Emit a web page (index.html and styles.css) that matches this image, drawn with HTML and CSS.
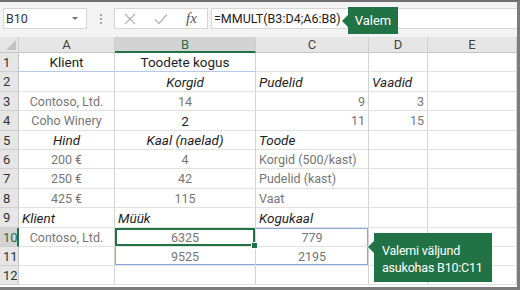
FILE: index.html
```html
<!DOCTYPE html>
<html lang="et">
<head>
    <meta charset="UTF-8">
    <title>MMULT</title>
    <link rel="stylesheet" href="styles.css">
</head>
<body>
    <div class="frame">
        <div class="toolbar">
            <div class="namebox"><span>B10</span><span class="caret"></span></div>
            <div class="grip"><span></span><span></span><span></span></div>
            <div class="fxbox">
                <svg class="ico-x" width="12" height="12" viewBox="0 0 12 12"><path d="M1 1L11 11M11 1L1 11" stroke="#b4b4b4" stroke-width="1.2" fill="none"/></svg>
                <svg class="ico-ok" width="14" height="12" viewBox="0 0 14 12"><path d="M1 6.5L5 10.5L13 1.5" stroke="#b4b4b4" stroke-width="1.3" fill="none"/></svg>
                <span class="fx">fx</span>
            </div>
            <div class="formula">=MMULT(B3:D4;A6:B8)</div>
        </div>
        <div class="sheet">
            <div class="hd corner"><span class="tri"></span></div>
            <div class="hd">A</div>
            <div class="hd sel">B</div>
            <div class="hd">C</div>
            <div class="hd">D</div>
            <div class="hd">E</div>

            <div class="rh">1</div>
            <div class="c ctr line-blue">Klient</div>
            <div class="c ctr line-blue">Toodete kogus</div>
            <div class="c"></div>
            <div class="c"></div>
            <div class="c"></div>

            <div class="rh">2</div>
            <div class="c"></div>
            <div class="c ctr it">Korgid</div>
            <div class="c it">Pudelid</div>
            <div class="c it">Vaadid</div>
            <div class="c"></div>

            <div class="rh">3</div>
            <div class="c ctr mut">Contoso, Ltd.</div>
            <div class="c ctr mut">14</div>
            <div class="c rt mut">9</div>
            <div class="c rt mut">3</div>
            <div class="c"></div>

            <div class="rh">4</div>
            <div class="c ctr mut">Coho Winery</div>
            <div class="c ctr">2</div>
            <div class="c rt mut">11</div>
            <div class="c rt mut">15</div>
            <div class="c"></div>

            <div class="rh">5</div>
            <div class="c ctr it">Hind</div>
            <div class="c ctr it">Kaal (naelad)</div>
            <div class="c it">Toode</div>
            <div class="c"></div>
            <div class="c"></div>

            <div class="rh">6</div>
            <div class="c ctr mut">200 €</div>
            <div class="c ctr mut">4</div>
            <div class="c mut">Korgid (500/kast)</div>
            <div class="c"></div>
            <div class="c"></div>

            <div class="rh">7</div>
            <div class="c ctr mut">250 €</div>
            <div class="c ctr mut">42</div>
            <div class="c mut">Pudelid (kast)</div>
            <div class="c"></div>
            <div class="c"></div>

            <div class="rh">8</div>
            <div class="c ctr mut">425 €</div>
            <div class="c ctr mut">115</div>
            <div class="c mut">Vaat</div>
            <div class="c"></div>
            <div class="c"></div>

            <div class="rh">9</div>
            <div class="c it">Klient</div>
            <div class="c it">Müük</div>
            <div class="c it">Kogukaal</div>
            <div class="c"></div>
            <div class="c"></div>

            <div class="rh sel">10</div>
            <div class="c ctr mut">Contoso, Ltd.</div>
            <div class="c ctr mut active">6325<span class="handle"></span></div>
            <div class="c ctr mut spill-tr">779</div>
            <div class="c"></div>
            <div class="c"></div>

            <div class="rh">11</div>
            <div class="c"></div>
            <div class="c ctr mut spill-bl">9525</div>
            <div class="c ctr mut spill-br">2195</div>
            <div class="c"></div>
            <div class="c"></div>

            <div class="rh">12</div>
            <div class="c"></div>
            <div class="c"></div>
            <div class="c"></div>
            <div class="c"></div>
            <div class="c"></div>
        </div>
        <div class="callout callout-formula">Valem</div>
        <div class="callout callout-output">Valemi väljund<br>asukohas B10:C11</div>
    </div>
</body>
</html>
```

FILE: styles.css
```css
body {
    margin: 0;
    font-family: Roboto, "Noto Sans", sans-serif;
}

.frame {
    position: relative;
    width: 520px;
    height: 290px;
    box-sizing: border-box;
    border-top: 2px solid #6f6f6f;
    border-right: 3px solid #7c7c7c;
    border-bottom: 3px solid #7c7c7c;
    background: #fff;
    overflow: hidden;
}

/* formula bar */
.toolbar {
    display: flex;
    align-items: flex-start;
    height: 35px;
    box-sizing: border-box;
    padding: 6px 0 0 3px;
    background: #f3f3f3;
}

.namebox {
    display: flex;
    align-items: center;
    justify-content: space-between;
    width: 84px;
    height: 21px;
    box-sizing: border-box;
    padding: 0 8px 0 2px;
    background: #fff;
    border: 1px solid #d6d6d6;
    font-size: 12.5px;
    color: #333;
}

.caret {
    width: 0;
    height: 0;
    border-left: 3px solid transparent;
    border-right: 3px solid transparent;
    border-top: 3px solid #707070;
}

.grip {
    display: flex;
    flex-direction: column;
    gap: 2px;
    width: 27px;
    padding-top: 6px;
    align-items: center;
}

.grip span {
    width: 2px;
    height: 2px;
    background: #a8a8a8;
}

.fxbox {
    display: flex;
    align-items: center;
    width: 94px;
    height: 21px;
    box-sizing: border-box;
    padding-left: 9px;
    background: #fff;
    border: 1px solid #d6d6d6;
}

.ico-ok {
    margin-left: 18px;
}

.fx {
    margin-left: 18px;
    font-family: "Liberation Serif", serif;
    font-style: italic;
    font-size: 15px;
    color: #555;
}

.formula {
    flex: 1;
    height: 21px;
    box-sizing: border-box;
    margin-left: 3px;
    padding-left: 2px;
    line-height: 19px;
    background: #fff;
    border: 1px solid #d6d6d6;
    border-right: none;
    font-size: 12.5px;
    color: #222;
}

/* grid */
.sheet {
    display: grid;
    grid-template-columns: 19px 96px 141px 113px 59px 89px;
    grid-template-rows: 16px 19px 20px 19px 20px 19px 19px 20px 19px 20px 19px 19px 19px;
    font-size: 13.5px;
}

.c,
.hd,
.rh {
    box-sizing: border-box;
    border-right: 1px solid #d4d4d4;
    border-bottom: 1px solid #e1e1e1;
    padding: 0 3px;
    white-space: nowrap;
    display: flex;
    align-items: center;
    color: #1e1e1e;
}

.hd {
    justify-content: center;
    background: #e6e6e6;
    border-right-color: #cfcfcf;
    border-bottom-color: #c6c6c6;
    color: #444;
    font-size: 13px;
}

.hd.sel {
    background: #d3d3d3;
    color: #217346;
    border-bottom: 2px solid #217346;
}

.corner {
    position: relative;
}

.tri {
    position: absolute;
    right: 2px;
    bottom: 2px;
    width: 0;
    height: 0;
    border-left: 10px solid transparent;
    border-bottom: 10px solid #c2c2c2;
}

.rh {
    background: #e6e6e6;
    border-right-color: #c6c6c6;
    border-bottom-color: #cfcfcf;
    padding-left: 3px;
    color: #333;
    font-size: 13px;
}

.rh.sel {
    background: #d3d3d3;
    color: #217346;
    border-right: 2px solid #217346;
}

.ctr {
    justify-content: center;
}

.rt {
    justify-content: flex-end;
}

.it {
    font-style: italic;
}

.mut {
    color: #767676;
    font-size: 12.5px;
}

.line-blue {
    border-bottom-color: #b6c9e6;
}

.active {
    position: relative;
    box-shadow: inset 0 0 0 2px #217346;
}

.handle {
    position: absolute;
    right: -3px;
    bottom: -3px;
    width: 5px;
    height: 5px;
    background: #217346;
    border: 1px solid #fff;
}

.spill-tr {
    box-shadow: inset 0 1px 0 #8aa9da, inset -1px 0 0 #8aa9da;
}

.spill-bl {
    box-shadow: inset 1px 0 0 #8aa9da, inset 0 -1px 0 #8aa9da;
}

.spill-br {
    box-shadow: inset -1px 0 0 #8aa9da, inset 0 -1px 0 #8aa9da;
}

/* callouts */
.callout {
    position: absolute;
    background: #217346;
    color: #fff;
    font-size: 13px;
    white-space: nowrap;
}

.callout::before {
    content: "";
    position: absolute;
    width: 0;
    height: 0;
    border-top: 6px solid transparent;
    border-bottom: 6px solid transparent;
    border-right: 6px solid #217346;
}

.callout-formula {
    left: 348px;
    top: 5px;
    width: 50px;
    height: 27px;
    line-height: 27px;
    text-align: center;
}

.callout-formula::before {
    left: -6px;
    top: 8px;
}

.callout-output {
    left: 374px;
    top: 231px;
    width: 118px;
    height: 49px;
    box-sizing: border-box;
    padding: 9px 0 0 8px;
    font-size: 12.5px;
    letter-spacing: -0.2px;
    line-height: 17px;
}

.callout-output::before {
    left: -6px;
    top: 8px;
}
```
